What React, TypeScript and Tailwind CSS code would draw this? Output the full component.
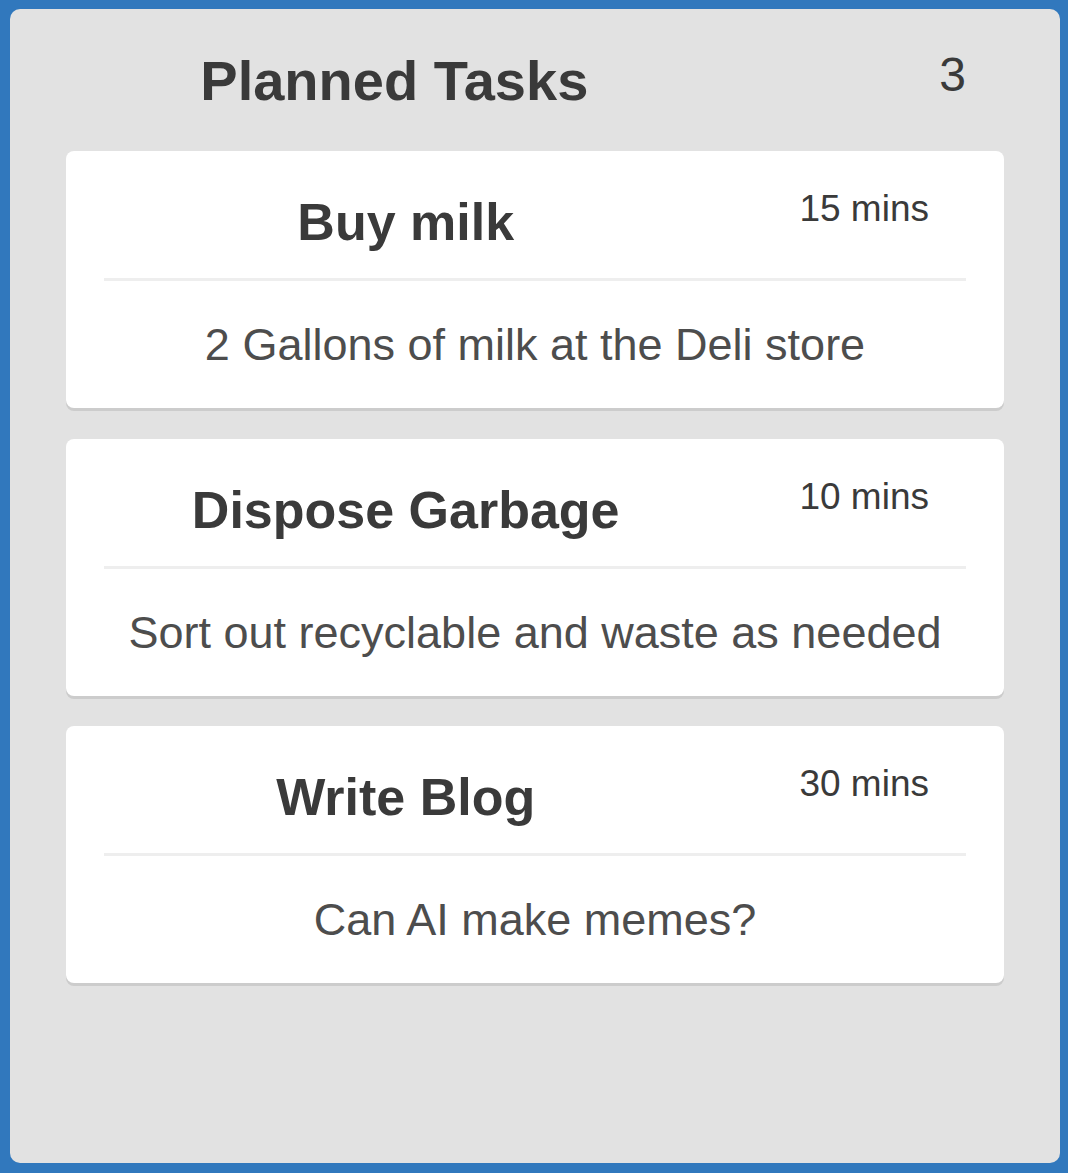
import React from 'react';

type Task = {
  title: string;
  minutes: number;
  description: string;
};

const tasks: Task[] = [
  { title: 'Buy milk', minutes: 15, description: '2 Gallons of milk at the Deli store' },
  { title: 'Dispose Garbage', minutes: 10, description: 'Sort out recyclable and waste as needed' },
  { title: 'Write Blog', minutes: 30, description: 'Can AI make memes?' }
];

function TaskCard({ task }: { task: Task }) {
  return (
    <div className="rounded-[8px] bg-white px-[38px] pt-[39px] pb-[41px] shadow-[0_3px_0_#cccccc]">
      <div className="flex items-start">
        <h2 className="mt-[6px] w-[70%] text-center text-[52px] font-bold leading-none text-[#3a3a3a]">
          {task.title}
        </h2>
        <p className="w-[30%] pr-[37px] text-right text-[37px] leading-none text-[#3a3a3a]">
          {task.minutes} mins
        </p>
      </div>
      <div className="mt-[30px] h-[3px] bg-[#eeeeee]" />
      <p className="mt-[41px] text-center text-[45px] leading-none text-[#4d4d4d]">{task.description}</p>
    </div>
  );
}

export default function App() {
  return (
    <div
      className="h-[1173px] bg-[#3178bd] pt-[9px] pr-[8px] pb-[10px] pl-[10px]"
      style={{ fontFamily: '"Liberation Sans", Arial, sans-serif' }}
    >
      <div className="h-full rounded-[10px] bg-[#e2e2e2] px-[56px] pt-[44px]">
        <div className="flex items-start">
          <h1 className="w-[70%] text-center text-[56px] font-bold leading-none text-[#3a3a3a]">Planned Tasks</h1>
          <span className="-mt-[2px] w-[30%] pr-[38px] text-right text-[48px] leading-none text-[#3a3a3a]">
            {tasks.length}
          </span>
        </div>
        <div className="mt-[42px] flex flex-col gap-[30.5px]">
          {tasks.map((task) => (
            <TaskCard key={task.title} task={task} />
          ))}
        </div>
      </div>
    </div>
  );
}
